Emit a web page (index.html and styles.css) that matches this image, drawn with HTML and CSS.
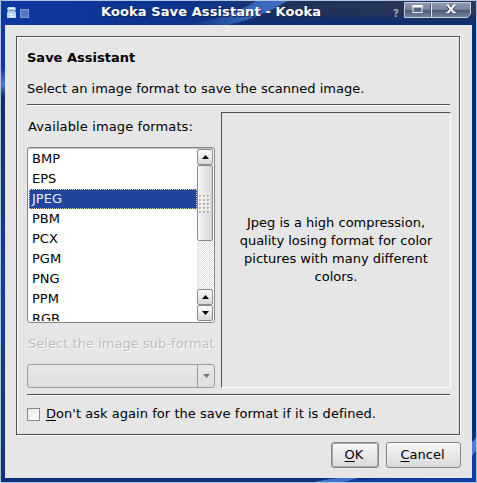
FILE: index.html
```
<!DOCTYPE html>
<html>
<head>
<meta charset="utf-8">
<title>Kooka Save Assistant - Kooka</title>
<link rel="stylesheet" href="styles.css">
</head>
<body>
<div class="window">
  <svg class="decoration" width="477" height="483" viewBox="0 0 477 483">
    <defs>
      <linearGradient id="bar" x1="0" x2="1" y1="0" y2="0">
        <stop offset="0" stop-color="#0d38a0"/>
        <stop offset=".36" stop-color="#0c3390"/>
        <stop offset=".48" stop-color="#123581"/>
        <stop offset=".56" stop-color="#1f315c"/>
        <stop offset="1" stop-color="#2a3755"/>
      </linearGradient>
      <linearGradient id="barshade" x1="0" x2="0" y1="0" y2="1">
        <stop offset="0.5" stop-color="#0a2c78" stop-opacity="0"/>
        <stop offset="1" stop-color="#0a2c78"/>
      </linearGradient>
      <linearGradient id="side" x1="0" x2="0" y1="0" y2="1">
        <stop offset="0" stop-color="#0d38a0"/>
        <stop offset=".14" stop-color="#0d38a0"/>
        <stop offset=".175" stop-color="#4a7fd0"/>
        <stop offset=".2" stop-color="#0b2e78"/>
        <stop offset=".6" stop-color="#143f95"/>
        <stop offset="1" stop-color="#0d3478"/>
      </linearGradient>
      <linearGradient id="streak" x1="0" x2="1" y1="0" y2="0">
        <stop offset="0" stop-color="#2a5dbc" stop-opacity="0"/>
        <stop offset=".6" stop-color="#3565bb"/>
        <stop offset="1" stop-color="#3f70c4"/>
      </linearGradient>
    </defs>
    <rect width="477" height="483" fill="#0c3078"/>
    <rect width="5" height="483" fill="url(#side)"/>
    <rect width="477" height="25" fill="url(#bar)"/>
    <rect x="240" width="237" height="25" fill="url(#barshade)"/>
    <path d="M188 25Q232 17 256 1H287Q262 17 228 25Z" fill="url(#streak)"/>
    <path d="M472 441L477 435V483H310Q340 478 472 478Z" fill="#103fa4"/>
    <path d="M310 483Q332 477 358 478L340 483Z" fill="#3f75c8"/>
    <path d="M472 442L477 437V449L472 456Z" fill="#4a80d0"/>
    <path d="M.5 483V.5H476.500V482.500H0" fill="none" stroke="#b0c4e5"/>
  </svg>

  <div class="titlebar">
    <svg class="app-icons" width="26" height="14" viewBox="0 0 26 14">
      <path d="M2 1H9L10 3L9 5L10 7V12H1V7L2 5L1 3Z" fill="#b9d3f0"/>
      <path d="M3 2.500H8M3 8.500H7M3 10.500H8" stroke="#f2f9ff"/>
      <path d="M3 4.500H8" stroke="#5e88c6"/>
      <rect x="14.500" y="3.500" width="8" height="8" fill="#5577c0" stroke="#7b98d2"/>
    </svg>
    <div class="caption">Kooka Save Assistant - Kooka</div>
    <span class="help">?</span>
    <svg class="controls" width="67" height="16" viewBox="0 0 67 16">
      <defs>
        <linearGradient id="ctl" x1="0" x2="0" y1="0" y2="1">
          <stop offset="0" stop-color="#929eaf"/>
          <stop offset=".48" stop-color="#75849b"/>
          <stop offset=".52" stop-color="#4b5b74"/>
          <stop offset="1" stop-color="#74859c"/>
        </linearGradient>
      </defs>
      <path d="M.5 .5H66.500V12L63.500 15.500H.5Z" fill="url(#ctl)" stroke="#c6ced9"/>
      <path d="M27.500 1V15" stroke="#e2e7ee"/>
      <path d="M26.500 1V15" stroke="#49566b"/>
      <rect x="9" y="3.500" width="9" height="7" fill="#5a687c" stroke="#e9edf2"/>
      <path d="M8.500 4.500H18.500" stroke="#fff" stroke-width="2"/>
      <path d="M43.500 3L50 10.500M50.500 3L44 10.500" stroke="#3b475a" stroke-width="4"/>
      <path d="M43.500 3L50 10.500M50.500 3L44 10.500" stroke="#f2f4f7" stroke-width="2.200"/>
      <path d="M42 3H45.500M48.500 3H52M42 10.500H45.500M48.500 10.500H52" stroke="#f2f4f7"/>
    </svg>
  </div>

  <div class="dialog">
    <div class="frame">
      <h1>Save Assistant</h1>
      <p class="intro">Select an image format to save the scanned image.</p>
      <div class="separator"></div>

      <div class="columns">
        <div class="formats">
          <div class="label">Available image formats:</div>
          <div class="listbox">
            <ul>
              <li>BMP</li>
              <li>EPS</li>
              <li class="selected">JPEG</li>
              <li>PBM</li>
              <li>PCX</li>
              <li>PGM</li>
              <li>PNG</li>
              <li>PPM</li>
              <li>RGB</li>
            </ul>
            <div class="scrollbar">
              <div class="arrow"><svg width="7" height="4"><path d="M0 4L3.500 0L7 4Z"/></svg></div>
              <div class="thumb"><span class="grip"></span></div>
              <div class="track"></div>
              <div class="arrow"><svg width="7" height="4"><path d="M0 4L3.500 0L7 4Z"/></svg></div>
              <div class="arrow"><svg width="7" height="4"><path d="M0 0L3.500 4L7 0Z"/></svg></div>
            </div>
          </div>
          <div class="label disabled">Select the image sub-format</div>
          <div class="combo"><span class="drop"><svg width="7" height="4"><path d="M0 0L3.500 4L7 0Z"/></svg></span></div>
        </div>
        <div class="help-text">Jpeg is a high compression,<br>quality losing format for color<br>pictures with many different<br>colors.</div>
      </div>

      <div class="separator"></div>
      <div class="check"><span class="box"></span><span><u>D</u>on't ask again for the save format if it is defined.</span></div>
    </div>

    <div class="buttons">
      <div class="button ok"><span><u>O</u>K</span></div>
      <div class="button cancel"><span><u>C</u>ancel</span></div>
    </div>
  </div>
</div>
</body>
</html>
```
FILE: styles.css
```
* {
  box-sizing: border-box;
}

body {
  margin: 0;
  font-family: "DejaVu Sans", sans-serif;
  font-size: 13px;
  line-height: 18px;
  color: #000;
}

svg {
  display: block;
  flex: none;
}

u {
  text-underline-offset: 2px;
  text-decoration-thickness: 1px;
}

.window {
  position: relative;
  width: 477px;
  height: 483px;
  padding: 0 5px;
  overflow: hidden;
}

/* window border artwork, behind everything */
.decoration {
  position: absolute;
  left: 0;
  top: 0;
  z-index: -1;
}

.titlebar {
  display: flex;
  height: 25px;
  align-items: flex-start;
}

.app-icons {
  margin: 6px 0 0 1px;
}

.caption {
  flex: 1;
  padding: 3px 0 0 69px;
  font-weight: bold;
  letter-spacing: 0.1px;
  color: #fff;
  text-shadow: 1px 1px 1px #10204a;
  white-space: nowrap;
}

.help {
  width: 11px;
  padding-top: 5px;
  font-size: 10px;
  font-weight: bold;
  line-height: 17px;
  color: #a2aabc;
}

.controls {
  margin: 2px 1px 0 0;
}

.dialog {
  width: 467px;
  height: 453px;
  padding: 11px;
  background: #e6e6e6;
}

.frame {
  width: 444px;
  height: 399px;
  padding: 12px 9px 0 10px;
  border: 1px solid #505050;
  box-shadow: inset 1px 1px 0 #fff, 1px 1px 0 #fff;
}

h1 {
  margin: 0;
  font-size: 13px;
}

.intro {
  margin: 13px 0 6px;
}

.separator {
  height: 2px;
  background: #505050;
  border-bottom: 1px solid #fff;
}

.columns {
  display: flex;
  justify-content: space-between;
  height: 288px;
  padding: 6px 0;
}

.formats {
  width: 188px;
}

.label {
  height: 35px;
  padding: 6px 0 0 1px;
  letter-spacing: 0.12px;
  white-space: nowrap;
}

.listbox {
  display: flex;
  height: 176px;
  border: 1px solid #858585;
  border-radius: 3px;
  box-shadow: inset 0 1px 0 #c4c4c4;
  background: #fff;
  padding: 1px;
  overflow: hidden;
}

.listbox ul {
  flex: 1;
  margin: 0;
  padding: 0;
  list-style: none;
  overflow: hidden;
}

.listbox li {
  height: 20px;
  padding-left: 3px;
  line-height: 20px;
}

.listbox .selected {
  padding-left: 2px;
  border: 1px dotted #c9cfae;
  line-height: 18px;
  color: #e8f2ff;
  background: #21449c;
}

.scrollbar {
  display: flex;
  flex-direction: column;
  width: 16px;
}

.arrow {
  display: flex;
  flex: none;
  height: 16px;
  align-items: center;
  justify-content: center;
  border: 1px solid #8c8c8c;
  border-radius: 2px;
  background: linear-gradient(#fafafa, #d8dad8);
}

.thumb {
  display: flex;
  flex: none;
  height: 76px;
  align-items: center;
  justify-content: center;
  border: 1px solid #8c8c8c;
  border-radius: 2px;
  background: linear-gradient(to right, #f7f7f7, #d3d6d3);
}

.grip {
  width: 12px;
  height: 20px;
  background:
    conic-gradient(#b4b6b4 25%, transparent 0) -2px 2px / 4px 4px,
    conic-gradient(#fff 25%, transparent 0) -1px 3px / 4px 4px;
}

.track {
  flex: 1;
  background: repeating-conic-gradient(#dedede 0 25%, #fff 0 50%) 0 0 / 2px 2px;
}

.disabled {
  height: 41px;
  padding-top: 12px;
  letter-spacing: 0.04px;
  color: #bcbcbc;
  text-shadow: 1px 1px 0 #fff;
}

.combo {
  display: flex;
  height: 24px;
  justify-content: flex-end;
  border: 1px solid #9c9c9c;
  border-radius: 3px;
  background: linear-gradient(#e7e8e7, #dcdfdc);
}

.drop {
  display: flex;
  width: 17px;
  align-items: center;
  justify-content: center;
  border-left: 1px solid #9c9c9c;
}

.drop path {
  fill: #7a7a7a;
}

.help-text {
  display: flex;
  width: 230px;
  margin-right: -1px;
  align-items: center;
  justify-content: center;
  border: 1px solid;
  border-color: #505050 #fff #fff #505050;
  text-align: center;
  white-space: nowrap;
}

.check {
  display: flex;
  padding-top: 9px;
  align-items: center;
  letter-spacing: 0.04px;
  white-space: nowrap;
}

.box {
  width: 13px;
  height: 13px;
  margin-right: 6px;
  border: 1px solid #8a8a8a;
  background: linear-gradient(135deg, #e8e8e8, #fff);
}

.buttons {
  display: flex;
  gap: 7px;
  justify-content: flex-end;
  padding-top: 7px;
}

.button {
  display: flex;
  height: 26px;
  padding-right: 2px;
  align-items: center;
  justify-content: center;
  border: 1px solid #858585;
  border-radius: 3px;
  background: linear-gradient(#f8f8f8, #d9d9d9);
}

.ok {
  width: 48px;
  box-shadow: inset 0 0 0 1px #a9a9a9;
}

.cancel {
  width: 75px;
}
```
